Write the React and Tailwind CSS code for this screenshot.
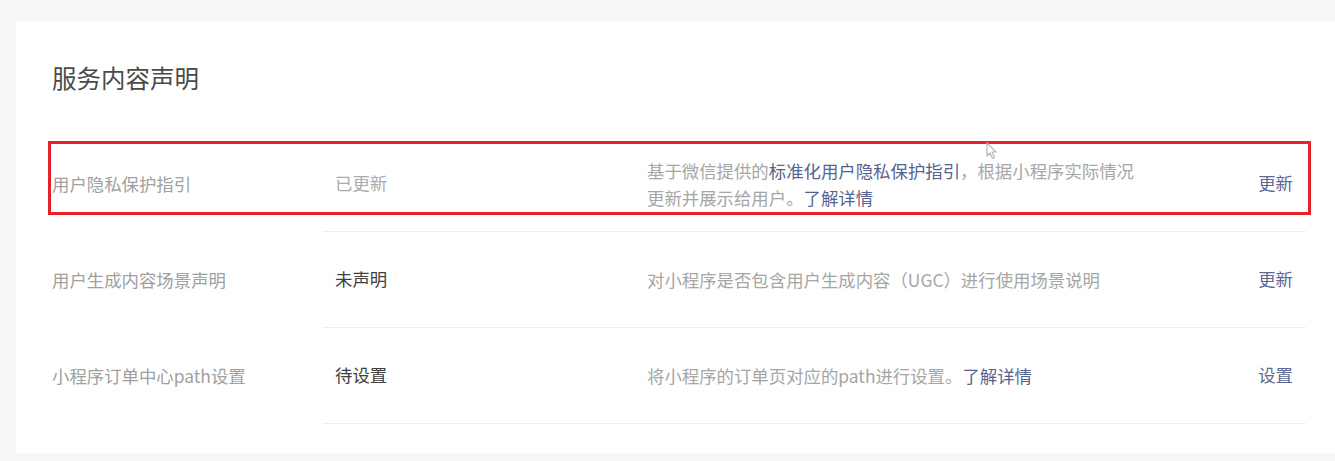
import React from 'react';

// Rows of the "服务内容声明" card
const rows = [
  {
    id: 1,
    label: '用户隐私保护指引',
    status: '已更新',
    statusDone: true,
    desc: (
      <>
        基于微信提供的<span className="text-[#56638f]">标准化用户隐私保护指引</span>，根据小程序实际情况
        <br />
        更新并展示给用户。<span className="text-[#56638f]">了解详情</span>
      </>
    ),
    action: '更新',
    highlight: true,
  },
  {
    id: 2,
    label: '用户生成内容场景声明',
    status: '未声明',
    desc: '对小程序是否包含用户生成内容（UGC）进行使用场景说明',
    action: '更新',
  },
  {
    id: 3,
    label: '小程序订单中心path设置',
    status: '待设置',
    desc: (
      <>
        将小程序的订单页对应的path进行设置。<span className="text-[#56638f]">了解详情</span>
      </>
    ),
    action: '设置',
  },
];

const font = { fontFamily: '"Noto Sans CJK SC", "Noto Sans", sans-serif' };

const App = () => {
  return (
    <div className="w-[1335px] h-[461px] bg-[#f6f7f9] pt-[22px] pl-[16px] overflow-hidden" style={font}>
      <div className="h-[431px] bg-white pl-[36px] pt-[40px]">
        <h2 className="text-[24.5px] leading-[32px] text-[#4a4a4a] font-normal">服务内容声明</h2>

        <div className="mt-[42px] w-[1254px]">
          {rows.map((row) => (
            <div key={row.id} className="relative flex h-[96px] text-[17.4px]">
              {/* label column, no divider underneath */}
              <div className="w-[271px] flex items-center text-[#a0a0a0]">{row.label}</div>

              {/* right part with its divider */}
              <div className="flex-1 flex items-center border-b border-[#eeeff2] pl-[12px] pr-[13px]">
                <div className={`w-[312px] ${row.statusDone ? 'text-[#ababab]' : 'text-[#404040]'}`}>
                  {row.status}
                </div>
                <div className="flex-1 leading-[27px] text-[#a6a6a6]">{row.desc}</div>
                <div className="text-[#5e6893]">{row.action}</div>
              </div>

              {/* red annotation box */}
              {row.highlight && (
                <div className="absolute left-[-4px] top-[5px] w-[1263px] h-[74px] border-[3px] border-[#e8202c] pointer-events-none" />
              )}

              {/* mouse cursor */}
              {row.highlight && (
                <svg className="absolute left-[934px] top-[6px]" width="12" height="18" viewBox="0 0 12 18">
                  <path d="M1 1 L1 14 L4 11 L6.5 16.5 L8.5 15.5 L6 10 L10 10 Z" fill="#ffffff" stroke="#b8b8b8" strokeWidth="1.2" strokeLinejoin="round" />
                </svg>
              )}
            </div>
          ))}
        </div>
      </div>
    </div>
  );
};

export default App;
